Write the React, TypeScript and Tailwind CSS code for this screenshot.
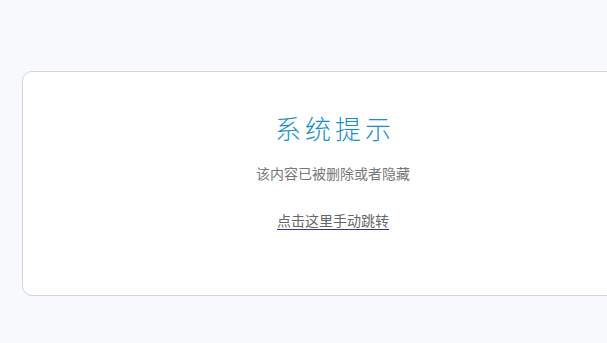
export default function App() {
  return (
    <div className="min-h-[343px] w-full overflow-hidden bg-[#f8f9fd] pt-[71px] pl-[22px] font-['Liberation_Sans','Noto_Sans_CJK_SC',sans-serif]">
      <div className="flex h-[225px] w-[622px] flex-col items-center rounded-[10px] border border-[#d0d5dd] bg-white pt-[42px]">
        <h1 className="pl-[4px] text-[26px] font-light leading-[32px] tracking-[4px] text-[#1b8fca]">系统提示</h1>
        <p className="mt-[18px] text-[14px] leading-[20px] text-[#777777]">该内容已被删除或者隐藏</p>
        <a
          href="#"
          className="mt-[27px] text-[14px] leading-[20px] text-[#666666] underline decoration-[#4a2a8c] underline-offset-[3px]"
        >
          点击这里手动跳转
        </a>
      </div>
    </div>
  )
}
